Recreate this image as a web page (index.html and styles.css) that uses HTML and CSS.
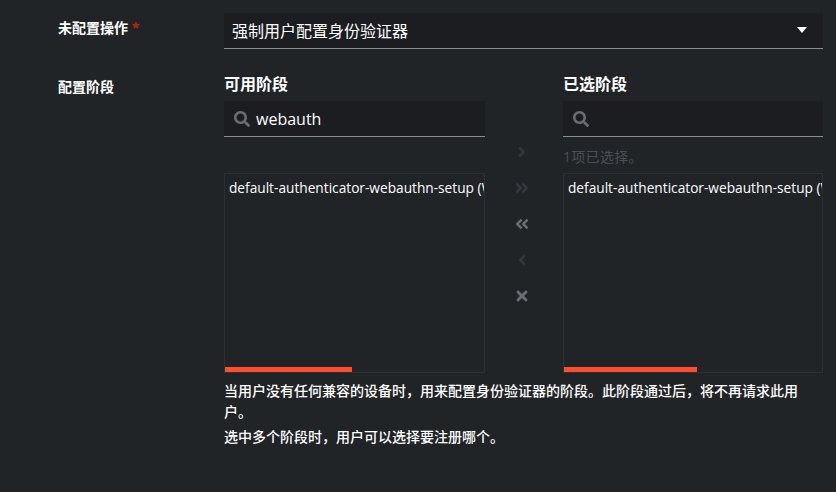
FILE: index.html
```html
<!DOCTYPE html>
<html lang="zh-CN">
<head>
  <meta charset="UTF-8">
  <meta name="viewport" content="width=device-width, initial-scale=1.0">
  <title>配置阶段</title>
  <link rel="stylesheet" href="styles.css">
</head>
<body>

<div class="form-row first-row">
  <div class="form-label">未配置操作 <span class="required">*</span></div>
  <div class="form-control">
    <div class="select">
      <span>强制用户配置身份验证器</span>
      <span class="caret"></span>
    </div>
  </div>
</div>

<div class="form-row">
  <div class="form-label stage-label">配置阶段</div>
  <div class="form-control">
    <div class="selector">
      <div class="pane">
        <h3 class="pane-title">可用阶段</h3>
        <div class="search">
          <svg class="search-icon" viewBox="0 0 512 512"><path d="M505 442.700L405.300 343c-4.500-4.500-10.600-7-17-7H372c27.600-35.300 44-79.700 44-128C416 93.100 322.900 0 208 0S0 93.100 0 208s93.100 208 208 208c48.300 0 92.700-16.400 128-44v16.300c0 6.400 2.500 12.500 7 17l99.700 99.700c9.400 9.400 24.600 9.400 33.900 0l28.300-28.300c9.400-9.400 9.400-24.600.1-34zM208 336c-70.700 0-128-57.200-128-128 0-70.700 57.200-128 128-128 70.700 0 128 57.200 128 128 0 70.700-57.200 128-128 128z"/></svg>
          <span>webauth</span>
        </div>
        <div class="status"></div>
        <div class="list">
          <div class="list-item">default-authenticator-webauthn-setup (WebAuthn)</div>
          <div class="scrollbar available-bar"></div>
        </div>
      </div>

      <div class="actions">
        <svg class="action disabled" viewBox="0 0 256 512"><path d="M224.300 273l-136 136c-9.400 9.400-24.600 9.400-33.900 0l-22.600-22.600c-9.400-9.400-9.400-24.600 0-33.900l96.400-96.400-96.400-96.400c-9.400-9.400-9.400-24.600 0-33.900L54.300 103c9.400-9.400 24.600-9.400 33.900 0l136 136c9.500 9.400 9.500 24.600.1 34z"/></svg>
        <svg class="action disabled" viewBox="0 0 448 512"><path d="M224.300 273l-136 136c-9.400 9.400-24.600 9.400-33.900 0l-22.600-22.600c-9.400-9.400-9.400-24.600 0-33.900l96.400-96.400-96.400-96.400c-9.400-9.400-9.400-24.600 0-33.900L54.300 103c9.400-9.400 24.600-9.400 33.900 0l136 136c9.500 9.400 9.500 24.600.1 34zm192-34l-136-136c-9.400-9.400-24.600-9.400-33.900 0l-22.600 22.600c-9.400 9.400-9.400 24.600 0 33.900l96.400 96.400-96.400 96.400c-9.400 9.400-9.400 24.600 0 33.900l22.600 22.600c9.400 9.400 24.600 9.400 33.900 0l136-136c9.400-9.200 9.400-24.400 0-33.800z"/></svg>
        <svg class="action" viewBox="0 0 448 512"><path d="M223.700 239l136-136c9.400-9.400 24.600-9.400 33.900 0l22.600 22.600c9.400 9.400 9.400 24.600 0 33.900L319.900 256l96.400 96.400c9.400 9.400 9.400 24.600 0 33.900L393.700 409c-9.400 9.400-24.600 9.400-33.900 0l-136-136c-9.500-9.400-9.500-24.600-.1-34zm-192 34l136 136c9.400 9.400 24.600 9.400 33.900 0l22.600-22.600c9.400-9.400 9.400-24.600 0-33.900L127.900 256l96.400-96.400c9.400-9.400 9.400-24.600 0-33.900L201.700 103c-9.400-9.400-24.600-9.400-33.900 0l-136 136c-9.500 9.400-9.500 24.600-.1 34z"/></svg>
        <svg class="action disabled" viewBox="0 0 256 512"><path d="M31.700 239l136-136c9.400-9.400 24.600-9.400 33.900 0l22.600 22.600c9.400 9.400 9.400 24.600 0 33.900L127.900 256l96.400 96.400c9.400 9.400 9.400 24.600 0 33.900L201.700 409c-9.400 9.400-24.600 9.400-33.900 0l-136-136c-9.500-9.400-9.500-24.600-.1-34z"/></svg>
        <svg class="action" viewBox="0 0 352 512"><path d="M242.720 256l100.070-100.070c12.280-12.280 12.280-32.190 0-44.480l-22.240-22.240c-12.280-12.280-32.190-12.280-44.480 0L176 189.280 75.930 89.210c-12.280-12.280-32.190-12.280-44.480 0L9.210 111.450c-12.280 12.280-12.280 32.190 0 44.480L109.280 256 9.210 356.070c-12.280 12.280-12.280 32.190 0 44.480l22.240 22.240c12.280 12.280 32.200 12.280 44.480 0L176 322.720l100.070 100.070c12.280 12.280 32.200 12.280 44.480 0l22.240-22.240c12.280-12.280 12.280-32.190 0-44.480L242.720 256z"/></svg>
      </div>

      <div class="pane selected-pane">
        <h3 class="pane-title">已选阶段</h3>
        <div class="search">
          <svg class="search-icon" viewBox="0 0 512 512"><path d="M505 442.700L405.300 343c-4.500-4.500-10.600-7-17-7H372c27.600-35.300 44-79.700 44-128C416 93.100 322.900 0 208 0S0 93.100 0 208s93.100 208 208 208c48.300 0 92.700-16.400 128-44v16.300c0 6.400 2.500 12.500 7 17l99.700 99.700c9.400 9.400 24.600 9.400 33.900 0l28.300-28.300c9.400-9.400 9.400-24.600.1-34zM208 336c-70.700 0-128-57.200-128-128 0-70.700 57.200-128 128-128 70.700 0 128 57.200 128 128 0 70.700-57.200 128-128 128z"/></svg>
        </div>
        <div class="status">1项已选择。</div>
        <div class="list">
          <div class="list-item">default-authenticator-webauthn-setup (WebAuthn)</div>
          <div class="scrollbar selected-bar"></div>
        </div>
      </div>
    </div>

    <p class="help-text first-help">当用户没有任何兼容的设备时，用来配置身份验证器的阶段。此阶段通过后，将不再请求此用户。</p>
    <p class="help-text">选中多个阶段时，用户可以选择要注册哪个。</p>
  </div>
</div>

</body>
</html>
```

FILE: styles.css
```css
html {
  background-color: #212427;
}
body {
  font-family: "Open Sans", "Noto Sans CJK SC", sans-serif;
  font-size: 14px;
  color: #fff;
  background-color: #212427;
  margin: 0;
  padding: 13px 13px 0 58px;
  overflow: hidden;
}
.form-row {
  display: grid;
  grid-template-columns: 166px 1fr;
}
.first-row {
  margin-bottom: 24px;
}
.form-label {
  font-size: 14px;
  font-weight: 700;
  line-height: 21px;
  padding-top: 4px;
}
.stage-label {
  padding-top: 3px;
}
.required {
  color: #c9190b;
}
.select {
  height: 33px;
  display: flex;
  align-items: center;
  justify-content: space-between;
  padding: 0 16px 2px 8px;
  font-size: 16px;
  background-color: #1b1d21;
  border-bottom: 1px solid #8a8d90;
}
.caret {
  width: 0;
  height: 0;
  border-left: 5px solid transparent;
  border-right: 5px solid transparent;
  border-top: 6px solid #fff;
}
.selector {
  display: grid;
  grid-template-columns: 261px 78px 260px;
}
.pane-title {
  font-size: 16px;
  font-weight: 700;
  line-height: 22px;
  margin: 0 0 6px;
}
.search {
  height: 35px;
  display: flex;
  align-items: center;
  gap: 6px;
  padding-left: 10px;
  font-size: 16px;
  background-color: #1b1d21;
  border-bottom: 1px solid #8a8d90;
}
.search-icon {
  width: 16px;
  height: 16px;
  fill: #6a6e73;
}
.status {
  height: 36px;
  line-height: 40px;
  font-size: 14px;
  letter-spacing: 0.3px;
  color: #4a4f55;
}
.list {
  height: 200px;
  display: flex;
  flex-direction: column;
  justify-content: space-between;
  overflow: hidden;
  box-sizing: border-box;
  border: 1px solid #2c2f33;
}
.list-item {
  padding: 4px 4px 6px;
  font-size: 13.700px;
  line-height: 20px;
  white-space: nowrap;
}
.scrollbar {
  height: 5px;
  background-color: #ff4d2e;
}
.available-bar {
  width: 127px;
}
.selected-bar {
  width: 133px;
}
.actions {
  padding: 71px 4px 0 0;
  display: flex;
  flex-direction: column;
  align-items: center;
  gap: 20px;
}
.action {
  height: 16px;
  width: 16px;
  flex: none;
  fill: #6a6e73;
}
.disabled {
  fill: #35383c;
}
.help-text {
  margin: 0;
  line-height: 21px;
  font-size: 14px;
  font-weight: 500;
  padding-top: 4px;
}
.first-help {
  padding-top: 7px;
}
```
